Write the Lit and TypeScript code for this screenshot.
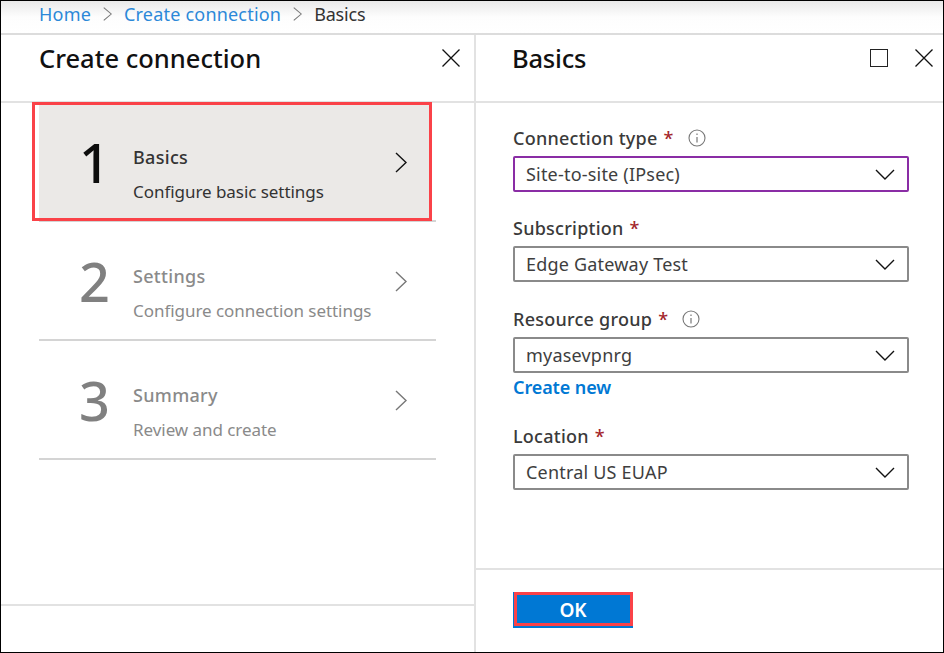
import { LitElement, html, css, svg } from "lit";
import { customElement } from "lit/decorators.js";

const closeIcon = html`<svg class="icon" width="18" height="18" viewBox="0 0 18 18"><path d="M0.5 0.5 L17.5 17.5 M17.5 0.5 L0.5 17.5" fill="none" stroke="#111" stroke-width="1.3"/></svg>`;
const chevronRight = svg`<path d="M1 1 L11 10.5 L1 20" fill="none" stroke="currentColor" stroke-width="1.4"/>`;
const infoIcon = html`<svg class="info" width="18" height="18" viewBox="0 0 18 18">
  <circle cx="9" cy="9" r="8" fill="none" stroke="#777" stroke-width="1.1"/>
  <path d="M9 8 V13.5 M9 4.6 V6" fill="none" stroke="#777" stroke-width="1.2"/>
</svg>`;

const steps = [
  { num: "1", title: "Basics", sub: "Configure basic settings", active: true },
  { num: "2", title: "Settings", sub: "Configure connection settings", active: false },
  { num: "3", title: "Summary", sub: "Review and create", active: false },
];

const fields = [
  { label: "Connection type", value: "Site-to-site (IPsec)", info: true, focus: true, cls: "f1" },
  { label: "Subscription", value: "Edge Gateway Test", info: false, focus: false, cls: "f2" },
  { label: "Resource group", value: "myasevpnrg", info: true, focus: false, cls: "f3", link: "Create new" },
  { label: "Location", value: "Central US EUAP", info: false, focus: false, cls: "f4" },
];

@customElement("app-root")
export class AppRoot extends LitElement {
  static styles = css`
    :host {
      display: block;
      width: 944px;
      height: 653px;
      font-family: "Noto Sans", "Open Sans", sans-serif;
      color: #111;
    }
    .page {
      box-sizing: border-box;
      width: 944px;
      height: 653px;
      border: 1px solid #000;
      display: flex;
      flex-direction: column;
      background: #fff;
      overflow: hidden;
    }
    .crumbs {
      box-sizing: border-box;
      height: 34px;
      flex: none;
      display: flex;
      align-items: center;
      padding: 0 0 6px 38px;
      font-size: 18px;
      letter-spacing: 0.2px;
      background: linear-gradient(#e9e9e9, #fdfdfd 50%, #fff);
      border-bottom: 2px solid #dcdcdc;
    }
    .crumbs a {
      color: #2b88d8;
    }
    .crumbs span {
      color: #333;
      letter-spacing: -0.2px;
    }
    .crumbs svg {
      margin: 0 12px;
      color: #777;
    }
    .panels {
      flex: 1;
      display: flex;
      min-height: 0;
    }
    .left {
      width: 475px;
      flex: none;
      display: flex;
      flex-direction: column;
      border-right: 2px solid #e2e2e2;
      box-sizing: border-box;
    }
    .right {
      flex: 1;
      display: flex;
      flex-direction: column;
      min-width: 0;
    }
    .head {
      box-sizing: border-box;
      height: 68px;
      flex: none;
      display: flex;
      align-items: flex-start;
      justify-content: space-between;
      border-bottom: 2px solid #e2e2e2;
    }
    .left .head {
      padding: 6px 14px 0 38px;
    }
    .right .head {
      padding: 6px 10px 0 36px;
    }
    h1 {
      margin: 0;
      font-size: 25.5px;
      line-height: 34px;
      font-weight: 500;
      color: #111;
    }
    .right h1 {
      letter-spacing: -0.2px;
    }
    .icon {
      margin-top: 8px;
      display: block;
    }
    .actions {
      display: flex;
      gap: 27px;
    }
    .max {
      width: 18px;
      height: 18px;
      border: 1.5px solid #222;
      box-sizing: border-box;
      margin-top: 8px;
    }
    .list {
      flex: 1;
      padding-left: 38px;
      width: 397px;
    }
    .step {
      position: relative;
      box-sizing: border-box;
      height: 119px;
      display: flex;
      align-items: center;
      border-bottom: 2px solid #d4d4d4;
      color: #8a8a8a;
    }
    .step.on {
      color: #333;
      background: linear-gradient(to right, #ebe9e7 392px, #fff 392px);
    }
    .outline {
      position: absolute;
      left: -7px;
      top: -1px;
      width: 400px;
      height: 119px;
      box-sizing: border-box;
      border: 3px solid #fa4248;
    }
    .num {
      box-sizing: border-box;
      width: 94px;
      flex: none;
      padding-left: 17px;
      text-align: center;
      font-size: 54px;
      line-height: 56px;
      font-weight: 500;
      color: #808080;
    }
    .on .num {
      color: #0d0d0d;
    }
    .text {
      flex: 1;
      margin-top: 28px;
    }
    .title {
      font-size: 18px;
      line-height: 24px;
      font-weight: 500;
      letter-spacing: 0.3px;
      margin-top: -2px;
    }
    .sub {
      font-size: 17px;
      line-height: 24px;
      margin-top: 11px;
      letter-spacing: -0.05px;
    }
    .step > svg {
      margin: 2px 29px 0 0;
      color: #777;
    }
    .on > svg {
      color: #111;
    }
    .foot-left {
      box-sizing: border-box;
      height: 48px;
      flex: none;
      border-top: 2px solid #e2e2e2;
    }
    .form {
      flex: 1;
      padding: 21px 34px 0 37px;
      min-height: 0;
    }
    .field {
      display: flex;
      flex-direction: column;
    }
    .f2 {
      margin-top: 22px;
    }
    .f3 {
      margin-top: 23px;
    }
    .f4 {
      margin-top: 21px;
    }
    label {
      display: flex;
      align-items: center;
      height: 28px;
      margin-bottom: 4px;
      font-size: 18px;
      letter-spacing: 0.25px;
      font-weight: 500;
      color: #3a3a3a;
    }
    .req {
      color: #a4262c;
      margin-left: 6px;
    }
    .info {
      margin-left: 14px;
    }
    .select {
      box-sizing: border-box;
      height: 36px;
      border: 2px solid #8a8a8a;
      border-radius: 2px;
      display: flex;
      align-items: center;
      justify-content: space-between;
      padding: 0 12px 0 11px;
      font-size: 18px;
      letter-spacing: 0.2px;
      color: #3e3e3e;
    }
    .select svg {
      margin-top: 1px;
    }
    .select.focus {
      border-color: #8a2da5;
    }
    .link {
      display: block;
      font-size: 18px;
      line-height: 28px;
      font-weight: 600;
      letter-spacing: -0.1px;
      color: #0078d4;
    }
    .foot {
      box-sizing: border-box;
      height: 84px;
      flex: none;
      border-top: 2px solid #e2e2e2;
      padding: 22px 0 0 37px;
    }
    .ok {
      position: relative;
      box-sizing: border-box;
      display: flex;
      align-items: center;
      justify-content: center;
      width: 120px;
      height: 36px;
      background: #0078d4;
      color: #fff;
      font-family: inherit;
      font-size: 19px;
      font-weight: 600;
      border: none;
      padding: 0;
    }
    .ok::after {
      content: "";
      position: absolute;
      inset: 0 0 2px 1px;
      border: 3px solid #fa4248;
    }
  `;

  render() {
    return html`
      <div class="page">
        <nav class="crumbs">
          <a>Home</a>
          <svg width="9" height="14" viewBox="0 0 12 21" preserveAspectRatio="none">${chevronRight}</svg>
          <a>Create connection</a>
          <svg width="9" height="14" viewBox="0 0 12 21" preserveAspectRatio="none">${chevronRight}</svg>
          <span>Basics</span>
        </nav>
        <div class="panels">
          <section class="left">
            <header class="head"><h1>Create connection</h1>${closeIcon}</header>
            <div class="list">
              ${steps.map(
                (s) => html`
                  <div class="step ${s.active ? "on" : ""}">
                    <div class="num">${s.num}</div>
                    <div class="text">
                      <div class="title">${s.title}</div>
                      <div class="sub">${s.sub}</div>
                    </div>
                    <svg width="12" height="21" viewBox="0 0 12 21">${chevronRight}</svg>
                    ${s.active ? html`<div class="outline"></div>` : ""}
                  </div>
                `
              )}
            </div>
            <div class="foot-left"></div>
          </section>
          <section class="right">
            <header class="head">
              <h1>Basics</h1>
              <div class="actions"><div class="max"></div>${closeIcon}</div>
            </header>
            <div class="form">
              ${fields.map(
                (f) => html`
                  <div class="field ${f.cls}">
                    <label>${f.label}<span class="req">*</span>${f.info ? infoIcon : ""}</label>
                    <div class="select ${f.focus ? "focus" : ""}">
                      ${f.value}
                      <svg width="20" height="11" viewBox="0 0 20 11"><path d="M1 1 L10 10 L19 1" fill="none" stroke="#111" stroke-width="1.4"/></svg>
                    </div>
                    ${f.link ? html`<a class="link">${f.link}</a>` : ""}
                  </div>
                `
              )}
            </div>
            <footer class="foot"><button class="ok">OK</button></footer>
          </section>
        </div>
      </div>
    `;
  }
}
